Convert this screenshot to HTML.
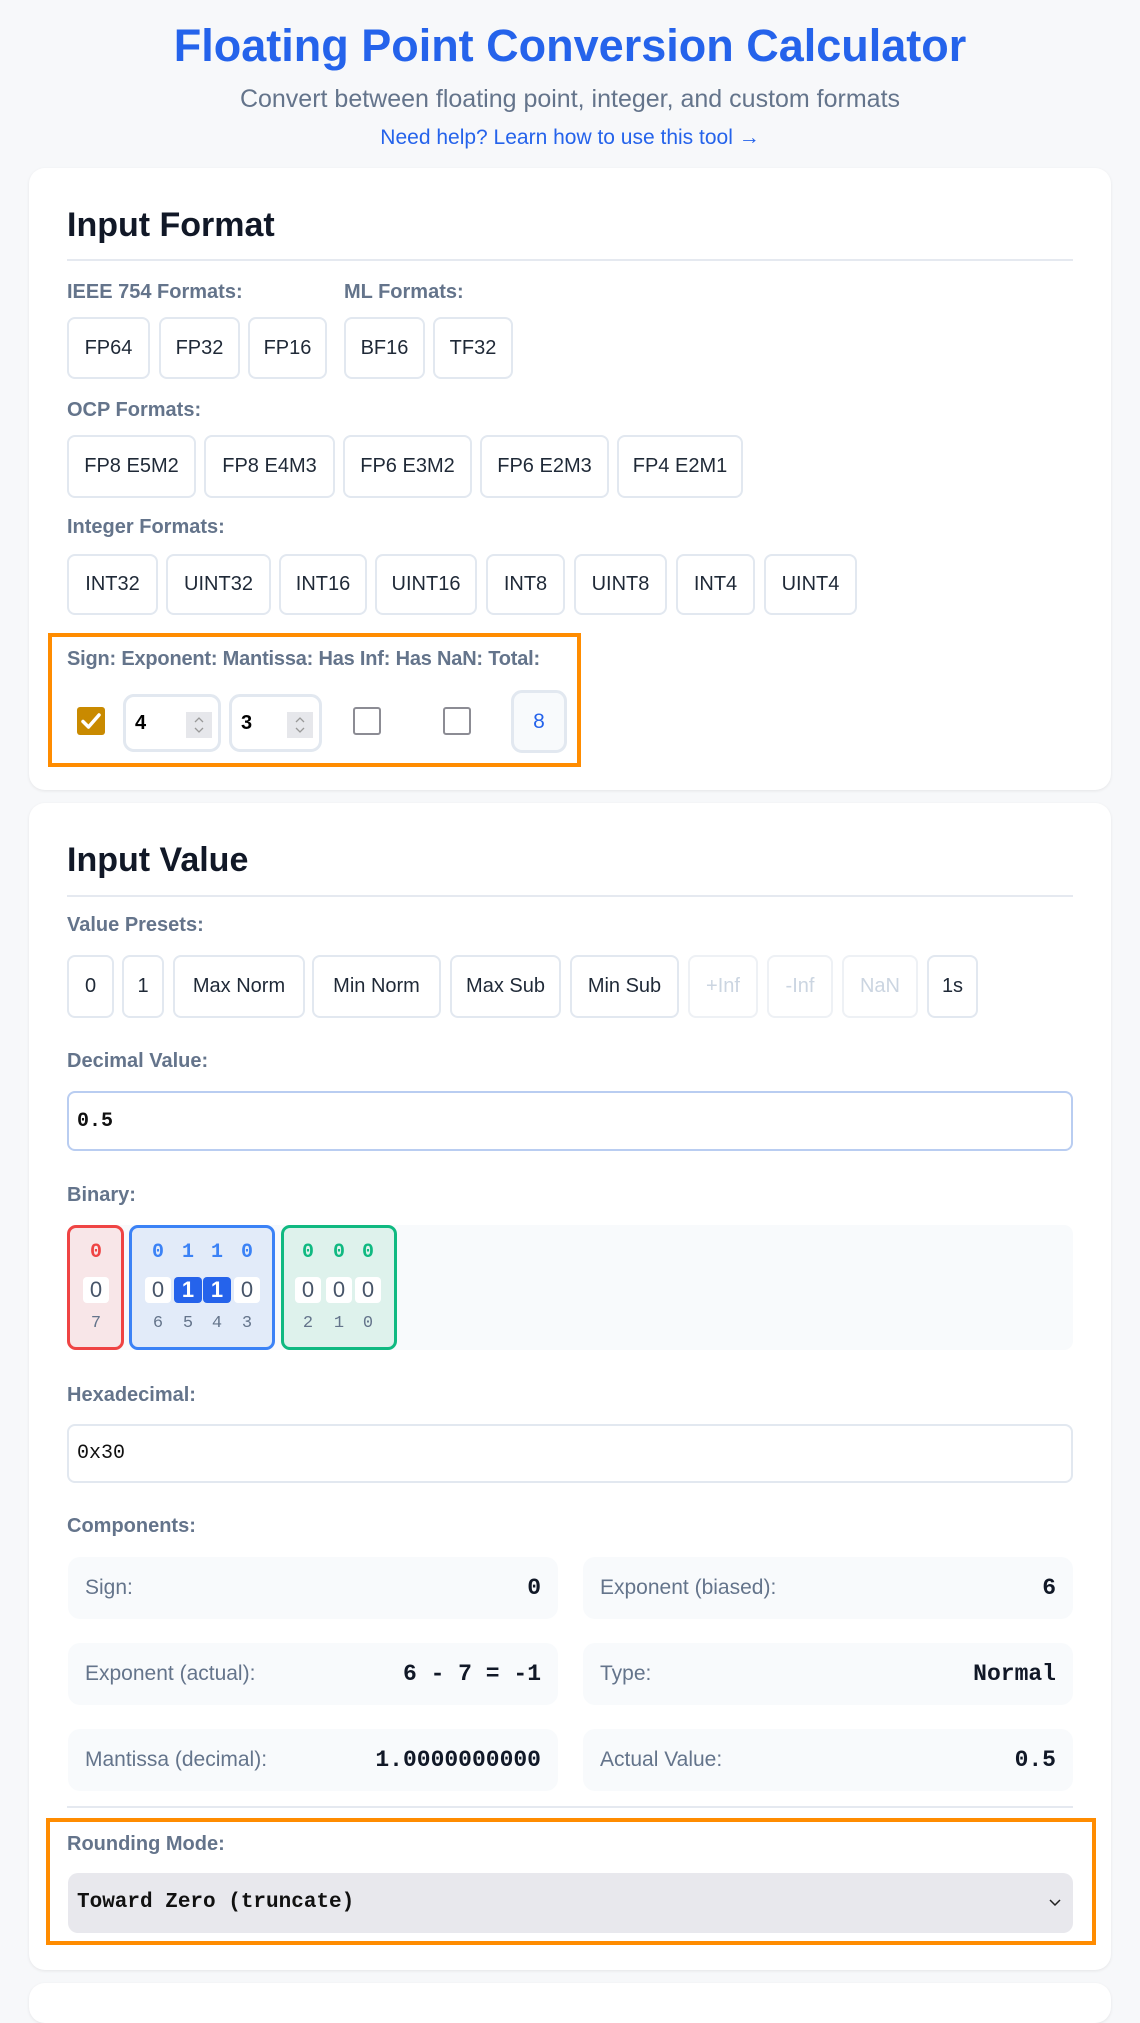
<!DOCTYPE html>
<html><head><meta charset="utf-8"><style>
*{box-sizing:border-box;margin:0;padding:0}
body{width:1140px;height:2000px;background:#f7f8fa;font-family:"Liberation Sans",sans-serif;position:relative;overflow:hidden}
.a{position:absolute}
.card{position:absolute;left:29px;width:1082px;background:#fff;border-radius:16px;box-shadow:0 1px 3px rgba(0,0,0,.08)}
.h2{position:absolute;left:67px;font-size:34px;font-weight:bold;color:#111827}
.hr{position:absolute;left:67px;width:1006px;height:2px;background:#e5e9f0}
.lbl{position:absolute;left:67px;font-size:20px;font-weight:bold;color:#64748b;white-space:nowrap}
.btn{position:absolute;border:2px solid #e2e8f0;border-radius:8px;background:#fff;font-size:20px;color:#1f2937;display:flex;align-items:center;justify-content:center;white-space:nowrap}
.dis{color:#cbd5e1;border-color:#eef1f5}
.inp{position:absolute;left:67px;width:1006px;border:2px solid #e2e8f0;border-radius:8px;background:#fff;font-family:"Liberation Mono",monospace;font-weight:bold;font-size:20px;color:#111;padding-left:8px;display:flex;align-items:center}
.comp{position:absolute;width:490px;height:62px;background:#f8fafc;border-radius:12px;display:flex;align-items:center;justify-content:space-between;padding:0 17px 0 17px}
.comp span:first-child{font-size:21px;color:#64748b}
.comp span:last-child{font-family:"Liberation Mono",monospace;font-weight:bold;font-size:23px;color:#111827}
.orange{position:absolute;border:4px solid #ff8c00}
.grp{position:absolute;top:1225px;height:125px;border:3px solid;border-radius:9px}
.d{position:absolute;width:26px;text-align:center;font-family:"Liberation Mono",monospace}
.hd{top:1241px;font-size:20px;font-weight:bold}
.bx{top:1277px;height:26px;background:#fff;border-radius:4px;font-size:22px;color:#475569;line-height:26px;font-family:"Liberation Sans",sans-serif}
.on{background:#2563eb;color:#fff;font-weight:bold}
.ix{top:1314px;font-size:17px;color:#64748b}
.cb{position:absolute;top:707px;width:28px;height:28px;border:2px solid #8c8c94;border-radius:3px;background:#fff}
.num{position:absolute;top:694px;height:58px;border:3px solid #e2e8f0;border-radius:11px;background:#fff;font-size:20px;font-weight:bold;color:#000;padding-left:9px;display:flex;align-items:center}
.spin{position:absolute;right:6px;top:15px;width:26px;height:26px;background:#e6e7eb}
</style></head><body>
<div class="a" style="left:0;width:1140px;top:20px;text-align:center;font-size:45px;font-weight:bold;color:#2563eb">Floating Point Conversion Calculator</div>
<div class="a" style="left:0;width:1140px;top:85px;text-align:center;font-size:25px;color:#64748b">Convert between floating point, integer, and custom formats</div>
<div class="a" style="left:0;width:1140px;top:126px;text-align:center;font-size:21px;color:#2563eb">Need help? Learn how to use this tool →</div>

<div class="card" style="top:168px;height:622px"></div>
<div class="h2" style="top:206px">Input Format</div>
<div class="hr" style="top:259px"></div>
<div class="lbl" style="top:281px">IEEE 754 Formats:</div>
<div class="lbl" style="top:281px;left:344px">ML Formats:</div>
<div class="btn" style="left:67px;top:317px;width:83px;height:62px">FP64</div>
<div class="btn" style="left:159px;top:317px;width:81px;height:62px">FP32</div>
<div class="btn" style="left:248px;top:317px;width:79px;height:62px">FP16</div>
<div class="btn" style="left:344px;top:317px;width:81px;height:62px">BF16</div>
<div class="btn" style="left:433px;top:317px;width:80px;height:62px">TF32</div>
<div class="lbl" style="top:399px">OCP Formats:</div>
<div class="btn" style="left:67px;top:435px;width:129px;height:63px">FP8 E5M2</div>
<div class="btn" style="left:204px;top:435px;width:131px;height:63px">FP8 E4M3</div>
<div class="btn" style="left:343px;top:435px;width:129px;height:63px">FP6 E3M2</div>
<div class="btn" style="left:480px;top:435px;width:129px;height:63px">FP6 E2M3</div>
<div class="btn" style="left:617px;top:435px;width:126px;height:63px">FP4 E2M1</div>
<div class="lbl" style="top:516px">Integer Formats:</div>
<div class="btn" style="left:67px;top:554px;width:91px;height:61px">INT32</div>
<div class="btn" style="left:166px;top:554px;width:105px;height:61px">UINT32</div>
<div class="btn" style="left:279px;top:554px;width:88px;height:61px">INT16</div>
<div class="btn" style="left:375px;top:554px;width:102px;height:61px">UINT16</div>
<div class="btn" style="left:486px;top:554px;width:79px;height:61px">INT8</div>
<div class="btn" style="left:574px;top:554px;width:93px;height:61px">UINT8</div>
<div class="btn" style="left:676px;top:554px;width:79px;height:61px">INT4</div>
<div class="btn" style="left:764px;top:554px;width:93px;height:61px">UINT4</div>
<div class="orange" style="left:48px;top:633px;width:533px;height:134px"></div>
<div class="lbl" style="top:648px;letter-spacing:-0.2px">Sign: Exponent: Mantissa: Has Inf: Has NaN: Total:</div>
<div class="a" style="left:77px;top:707px;width:28px;height:28px;background:#c98a00;border-radius:3px"><svg width="28" height="28" viewBox="0 0 28 28"><path d="M6 14.5 L11.5 20 L22 8" fill="none" stroke="#fff" stroke-width="3.5" stroke-linecap="round" stroke-linejoin="round"/></svg></div>
<div class="num" style="left:123px;width:98px">4<div class="spin"><svg width="26" height="26" viewBox="0 0 26 26"><path d="M9 10 L13 6 L17 10 M9 16 L13 20 L17 16" fill="none" stroke="#999" stroke-width="1.3"/></svg></div></div>
<div class="num" style="left:229px;width:93px">3<div class="spin"><svg width="26" height="26" viewBox="0 0 26 26"><path d="M9 10 L13 6 L17 10 M9 16 L13 20 L17 16" fill="none" stroke="#999" stroke-width="1.3"/></svg></div></div>
<div class="cb" style="left:353px"></div>
<div class="cb" style="left:443px"></div>
<div class="a" style="left:511px;top:690px;width:56px;height:63px;border:3px solid #e2e8f0;border-radius:11px;background:#f8fafc;color:#2563eb;font-size:21px;text-align:center;line-height:57px">8</div>

<div class="card" style="top:803px;height:1167px"></div>
<div class="h2" style="top:841px">Input Value</div>
<div class="hr" style="top:895px"></div>
<div class="lbl" style="top:914px">Value Presets:</div>
<div class="btn" style="left:67px;top:955px;width:47px;height:63px">0</div>
<div class="btn" style="left:122px;top:955px;width:42px;height:63px">1</div>
<div class="btn" style="left:173px;top:955px;width:132px;height:63px">Max Norm</div>
<div class="btn" style="left:312px;top:955px;width:129px;height:63px">Min Norm</div>
<div class="btn" style="left:450px;top:955px;width:111px;height:63px">Max Sub</div>
<div class="btn" style="left:570px;top:955px;width:109px;height:63px">Min Sub</div>
<div class="btn dis" style="left:688px;top:955px;width:70px;height:63px">+Inf</div>
<div class="btn dis" style="left:767px;top:955px;width:66px;height:63px">-Inf</div>
<div class="btn dis" style="left:842px;top:955px;width:76px;height:63px">NaN</div>
<div class="btn" style="left:927px;top:955px;width:51px;height:63px">1s</div>
<div class="lbl" style="top:1050px">Decimal Value:</div>
<div class="inp" style="top:1091px;height:60px;border-color:#b9cdf1">0.5</div>
<div class="lbl" style="top:1184px">Binary:</div>
<div class="a" style="left:67px;top:1225px;width:1006px;height:125px;background:#f8fafc;border-radius:9px"></div>
<div class="grp" style="left:67px;width:57px;border-color:#ef4444;background:#f8e6e8"></div>
<div class="grp" style="left:129px;width:146px;border-color:#3b82f6;background:#e2ebf9"></div>
<div class="grp" style="left:281px;width:116px;border-color:#10b981;background:#def2ec"></div>
<div class="d hd" style="left:83px;color:#ef4444">0</div>
<div class="d bx" style="left:83px">0</div>
<div class="d ix" style="left:83px">7</div>
<div class="d hd" style="left:145px;color:#3b82f6">0</div><div class="d hd" style="left:175px;color:#3b82f6">1</div><div class="d hd" style="left:204px;color:#3b82f6">1</div><div class="d hd" style="left:234px;color:#3b82f6">0</div>
<div class="d bx" style="left:145px">0</div><div class="d bx on" style="left:174px;width:28px">1</div><div class="d bx on" style="left:203px;width:28px">1</div><div class="d bx" style="left:234px">0</div>
<div class="d ix" style="left:145px">6</div><div class="d ix" style="left:175px">5</div><div class="d ix" style="left:204px">4</div><div class="d ix" style="left:234px">3</div>
<div class="d hd" style="left:295px;color:#10b981">0</div><div class="d hd" style="left:326px;color:#10b981">0</div><div class="d hd" style="left:355px;color:#10b981">0</div>
<div class="d bx" style="left:295px">0</div><div class="d bx" style="left:326px">0</div><div class="d bx" style="left:355px">0</div>
<div class="d ix" style="left:295px">2</div><div class="d ix" style="left:326px">1</div><div class="d ix" style="left:355px">0</div>
<div class="lbl" style="top:1384px">Hexadecimal:</div>
<div class="inp" style="top:1424px;height:59px;font-weight:normal;color:#111">0x30</div>
<div class="lbl" style="top:1515px">Components:</div>
<div class="comp" style="left:68px;top:1557px"><span>Sign:</span><span>0</span></div>
<div class="comp" style="left:583px;top:1557px"><span>Exponent (biased):</span><span>6</span></div>
<div class="comp" style="left:68px;top:1643px"><span>Exponent (actual):</span><span>6 - 7 = -1</span></div>
<div class="comp" style="left:583px;top:1643px"><span>Type:</span><span>Normal</span></div>
<div class="comp" style="left:68px;top:1729px"><span>Mantissa (decimal):</span><span>1.0000000000</span></div>
<div class="comp" style="left:583px;top:1729px"><span>Actual Value:</span><span>0.5</span></div>
<div class="hr" style="top:1806px"></div>
<div class="orange" style="left:46px;top:1818px;width:1050px;height:127px"></div>
<div class="lbl" style="top:1833px">Rounding Mode:</div>
<div class="a" style="left:68px;top:1873px;width:1005px;height:60px;background:#e8e8ed;border-radius:10px;font-family:'Liberation Mono',monospace;font-weight:bold;font-size:21px;color:#111;padding-left:9px;line-height:60px">Toward Zero (truncate)<svg style="position:absolute;right:12px;top:26px" width="12" height="8" viewBox="0 0 12 8"><path d="M1 1 L6 6 L11 1" fill="none" stroke="#222" stroke-width="1.5"/></svg></div>
<div class="card" style="top:1983px;height:40px"></div>
</body></html>
